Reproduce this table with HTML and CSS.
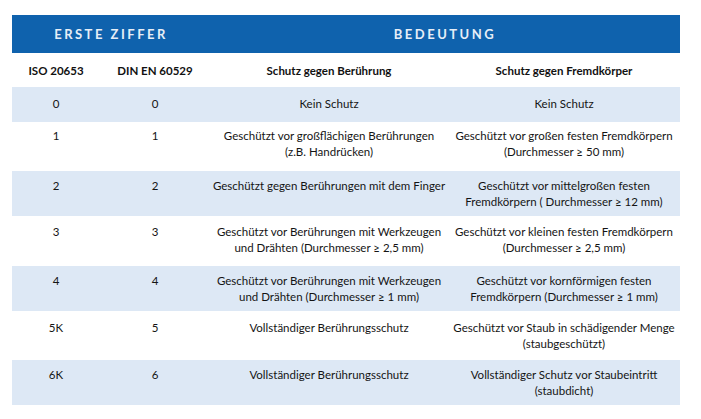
FILE: index.html
```html
<!DOCTYPE html>
<html lang="de">
<head>
<meta charset="utf-8">
<title>Schutzarten</title>
<link rel="stylesheet" href="styles.css">
</head>
<body>
<table class="ip-table">
  <colgroup>
    <col class="c1"><col class="c2"><col class="c3"><col class="c4">
  </colgroup>
  <thead>
    <tr class="head-main">
      <th colspan="2">ERSTE ZIFFER</th>
      <th colspan="2">BEDEUTUNG</th>
    </tr>
    <tr class="head-sub">
      <th>ISO 20653</th>
      <th>DIN EN 60529</th>
      <th>Schutz gegen Berührung</th>
      <th>Schutz gegen Fremdkörper</th>
    </tr>
  </thead>
  <tbody>
    <tr class="alt r35">
      <td>0</td><td>0</td><td>Kein Schutz</td><td>Kein Schutz</td>
    </tr>
    <tr class="r49">
      <td>1</td><td>1</td>
      <td>Geschützt vor großflächigen Berührungen<br>(z.B. Handrücken)</td>
      <td>Geschützt vor großen festen Fremdkörpern<br>(Durchmesser ≥ 50 mm)</td>
    </tr>
    <tr class="alt r45">
      <td>2</td><td>2</td>
      <td>Geschützt gegen Berührungen mit dem Finger</td>
      <td>Geschützt vor mittelgroßen festen<br>Fremdkörpern ( Durchmesser ≥ 12 mm)</td>
    </tr>
    <tr class="r50">
      <td>3</td><td>3</td>
      <td>Geschützt vor Berührungen mit Werkzeugen<br>und Drähten (Durchmesser ≥ 2,5 mm)</td>
      <td>Geschützt vor kleinen festen Fremdkörpern<br>(Durchmesser ≥ 2,5 mm)</td>
    </tr>
    <tr class="alt r45">
      <td>4</td><td>4</td>
      <td>Geschützt vor Berührungen mit Werkzeugen<br>und Drähten (Durchmesser ≥ 1 mm)</td>
      <td>Geschützt vor kornförmigen festen<br>Fremdkörpern (Durchmesser ≥ 1 mm)</td>
    </tr>
    <tr class="r49b">
      <td>5K</td><td>5</td>
      <td>Vollständiger Berührungsschutz</td>
      <td>Geschützt vor Staub in schädigender Menge<br>(staubgeschützt)</td>
    </tr>
    <tr class="alt r45">
      <td>6K</td><td>6</td>
      <td>Vollständiger Berührungsschutz</td>
      <td>Vollständiger Schutz vor Staubeintritt<br>(staubdicht)</td>
    </tr>
  </tbody>
</table>
</body>
</html>
```

FILE: styles.css
```css
html, body {
  margin: 0;
  padding: 0;
  background: #ffffff;
}

body {
  padding: 15px 0 0 12px;
  font-family: Lato, "Open Sans", sans-serif;
  color: #141414;
}

.ip-table {
  width: 668px;
  border-collapse: collapse;
  table-layout: fixed;
}

.c1 { width: 88px; }
.c2 { width: 110px; }
.c3 { width: 238px; }
.c4 { width: 232px; }

.ip-table th,
.ip-table td {
  padding: 0;
  text-align: center;
}

.head-main th {
  height: 38px;
  background: #0f62ad;
  color: #e6eef7;
  font-size: 13px;
  font-weight: 700;
  letter-spacing: 2.5px;
  vertical-align: middle;
}

.head-sub th {
  height: 34px;
  font-size: 11.5px;
  font-weight: 700;
  color: #111111;
  vertical-align: middle;
}

.ip-table td {
  box-sizing: border-box;
  font-size: 11.5px;
  line-height: 16px;
  vertical-align: top;
  padding-top: 7px;
  color: #141414;
}

.alt td {
  background: #dde8f5;
}

.r35 td { height: 35px; padding-top: 9px; }
.r45 td { height: 45px; }
.r49 td { height: 49px; padding-top: 6px; }
.r49b td { height: 49px; padding-top: 9px; }
.r50 td { height: 50px; padding-top: 8px; }
```
